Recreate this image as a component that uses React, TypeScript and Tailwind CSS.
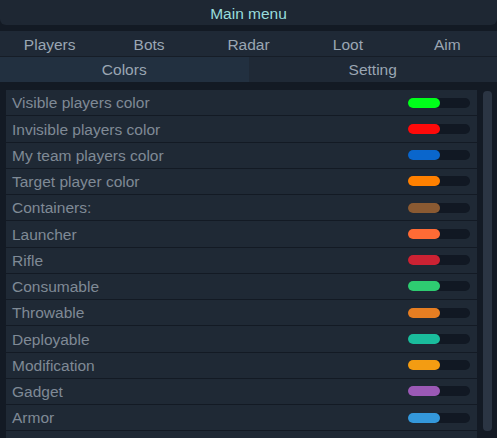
import React from "react";

const items: [string, string][] = [
  ["Visible players color", "#00ff1a"],
  ["Invisible players color", "#ff0a0a"],
  ["My team players color", "#0a66cc"],
  ["Target player color", "#ff8000"],
  ["Containers:", "#8a5a32"],
  ["Launcher", "#ff6b35"],
  ["Rifle", "#cc2233"],
  ["Consumable", "#2ecc71"],
  ["Throwable", "#e67e22"],
  ["Deployable", "#1abc9c"],
  ["Modification", "#f39c12"],
  ["Gadget", "#9b59b6"],
  ["Armor", "#3498db"],
  ["", "#1f2935"],
];

export default function App() {
  return (
    <div
      className="w-[497px] h-[438px] bg-[#131a24] overflow-hidden flex flex-col text-[15.5px] leading-none"
      style={{ fontFamily: '"Liberation Sans", Arial, sans-serif' }}
    >
      <div className="h-[25px] shrink-0 bg-[#1e2733] rounded-b-[6px] flex items-center justify-center pt-[3px] text-[#98dcdc]">
        Main menu
      </div>
      <div className="h-[6px] shrink-0" />
      <div className="h-[26px] shrink-0 bg-[#1f2936] grid grid-cols-5 text-[#9aa6b3] border-b border-[#161d27]">
        {["Players", "Bots", "Radar", "Loot", "Aim"].map((t) => (
          <div key={t} className="flex items-center justify-center pt-[2px]">
            {t}
          </div>
        ))}
      </div>
      <div className="h-[25px] shrink-0 grid grid-cols-2 text-[#9aa6b3]">
        <div className="bg-[#223040] flex items-center justify-center pt-[1px]">Colors</div>
        <div className="bg-[#1f2936] flex items-center justify-center pt-[1px]">Setting</div>
      </div>
      <div className="h-[8px] shrink-0" />
      <div className="flex flex-1 min-h-0 pl-[6px]">
        <div className="w-[471px] flex flex-col gap-[1px]">
          {items.map(([label, color], i) => (
            <div
              key={i}
              className="h-[25.25px] shrink-0 bg-[#1f2935] flex items-center justify-between pl-[6px] pr-[7px]"
            >
              <span className="text-[#7f8a96] pt-[1px]">{label}</span>
              {label && (
                <div className="w-[62px] h-[10px] rounded-full bg-[#111823] flex">
                  <div className="w-[32px] h-full rounded-full" style={{ backgroundColor: color }} />
                </div>
              )}
            </div>
          ))}
        </div>
        <div className="w-[6px]" />
        <div className="w-[9px] h-[340px] mt-[1px] rounded-[4px] bg-[#2b3543]" />
      </div>
    </div>
  );
}
